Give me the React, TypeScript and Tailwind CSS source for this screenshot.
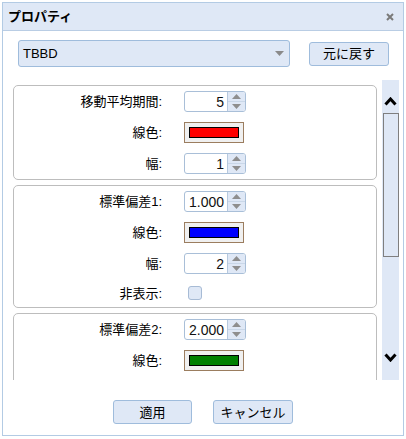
import React from "react";

const font = { fontFamily: '"Liberation Sans", "Noto Sans CJK JP", sans-serif' };

function Spinner({ value }: { value: string }) {
  return (
    <div className="flex h-[21px] w-[62px] rounded-[3px] border border-[#a9bfd8] bg-white overflow-hidden">
      <div className="flex flex-1 items-center justify-end pr-[3px] text-[14px] leading-none text-[#111]">{value}</div>
      <div className="flex w-[18px] flex-col border-l border-[#b7c9de] bg-[#dfe8f6]">
        <div className="flex flex-1 items-center justify-center border-b border-[#c9d7e8]">
          <svg width="9" height="5" viewBox="0 0 9 5"><polygon points="0,5 9,5 4.5,0" fill="#8e8e8e" /></svg>
        </div>
        <div className="flex flex-1 items-center justify-center">
          <svg width="9" height="5" viewBox="0 0 9 5"><polygon points="0,0 9,0 4.5,5" fill="#8e8e8e" /></svg>
        </div>
      </div>
    </div>
  );
}

function ColorBox({ color }: { color: string }) {
  return (
    <div className="h-[21px] w-[60px] border border-[#9b7d5f] bg-[#f0f0f0] p-[4px]">
      <div className="h-full w-full border border-black" style={{ backgroundColor: color }} />
    </div>
  );
}

function Row({ label, children, h = "h-[31px]" }: { label: string; children: React.ReactNode; h?: string }) {
  return (
    <div className={`flex items-center ${h}`}>
      <div className="w-[148px] text-right text-[13px] leading-none text-black">{label}</div>
      <div className="ml-[22px]">{children}</div>
    </div>
  );
}

function Group({ children }: { children: React.ReactNode }) {
  return <div className="w-[364px] shrink-0 rounded-[5px] border border-[#bdbdbd] bg-white">{children}</div>;
}

function Chevron({ up }: { up: boolean }) {
  return (
    <svg width="13" height="9" viewBox="0 0 13 9">
      <polyline
        points={up ? "1.5,7.5 6.5,2 11.5,7.5" : "1.5,1.5 6.5,7 11.5,1.5"}
        fill="none"
        stroke="#000"
        strokeWidth="3"
      />
    </svg>
  );
}

export default function App() {
  return (
    <div className="h-[439px] w-[406px] bg-white pl-[2px] pt-[2px]" style={font}>
      <div className="flex h-[434px] w-[402px] flex-col border border-[#b3cbe4] bg-white">
        <div className="flex h-[28px] shrink-0 items-center justify-between border-b border-[#b9cde4] bg-[#dfe8f6] pl-[5px] pr-[9px]">
          <span className="text-[13px] font-bold leading-none text-black">プロパティ</span>
          <svg width="8" height="8" viewBox="0 0 8 8">
            <path d="M1 1 L7 7 M7 1 L1 7" stroke="#7a7a7a" strokeWidth="2" />
          </svg>
        </div>

        <div className="mt-[9px] flex items-center pl-[15px]">
          <div className="flex h-[27px] w-[272px] items-center justify-between rounded-[3px] border border-[#9fbcdc] bg-[#dfe8f6] pl-[4px] pr-[5px]">
            <span className="text-[13px] leading-none text-black">TBBD</span>
            <svg width="9" height="5" viewBox="0 0 9 5"><polygon points="0,0 9,0 4.5,5" fill="#8a8a8a" /></svg>
          </div>
          <div className="ml-[19px] flex h-[24px] w-[80px] items-center justify-center rounded-[3px] border border-[#9fbcdc] bg-[#dfe8f6] text-[13px] leading-none text-black">
            元に戻す
          </div>
        </div>

        <div className="mt-[13px] flex h-[300px] shrink-0 pl-[10px]">
          <div className="flex h-[300px] flex-col gap-[5px] overflow-hidden pt-[5px]">
            <Group>
              <Row label="移動平均期間:"><Spinner value="5" /></Row>
              <Row label="線色:"><ColorBox color="#ff0000" /></Row>
              <Row label="幅:"><Spinner value="1" /></Row>
            </Group>
            <Group>
              <Row label="標準偏差1:"><Spinner value="1.000" /></Row>
              <Row label="線色:"><ColorBox color="#0000ff" /></Row>
              <Row label="幅:"><Spinner value="2" /></Row>
              <Row label="非表示:" h="h-[28px]">
                <div className="ml-[4px] h-[14px] w-[14px] rounded-[3px] border border-[#a7bbd5] bg-[#dfe8f6]" />
              </Row>
            </Group>
            <Group>
              <Row label="標準偏差2:"><Spinner value="2.000" /></Row>
              <Row label="線色:"><ColorBox color="#008000" /></Row>
              <div className="h-[31px]" />
            </Group>
          </div>
          <div className="ml-[5px] flex h-[300px] w-[17px] shrink-0 flex-col items-center bg-[#dfe8f6]">
            <div className="mt-[17px] flex h-[9px] items-center justify-center">
              <Chevron up />
            </div>
            <div className="mt-[7px] h-[144px] w-[16px] border border-[#7f7f7f] bg-[#dfe8f6]" />
            <div className="mt-[96px] flex h-[9px] items-center justify-center">
              <Chevron up={false} />
            </div>
          </div>
        </div>

        <div className="mt-[20px] flex justify-center gap-[21px]">
          <div className="flex h-[24px] w-[79px] items-center justify-center rounded-[3px] border border-[#9fbcdc] bg-[#dfe8f6] text-[13px] leading-none text-black">
            適用
          </div>
          <div className="flex h-[24px] w-[80px] items-center justify-center rounded-[3px] border border-[#9fbcdc] bg-[#dfe8f6] text-[13px] leading-none text-black">
            キャンセル
          </div>
        </div>
      </div>
    </div>
  );
}
